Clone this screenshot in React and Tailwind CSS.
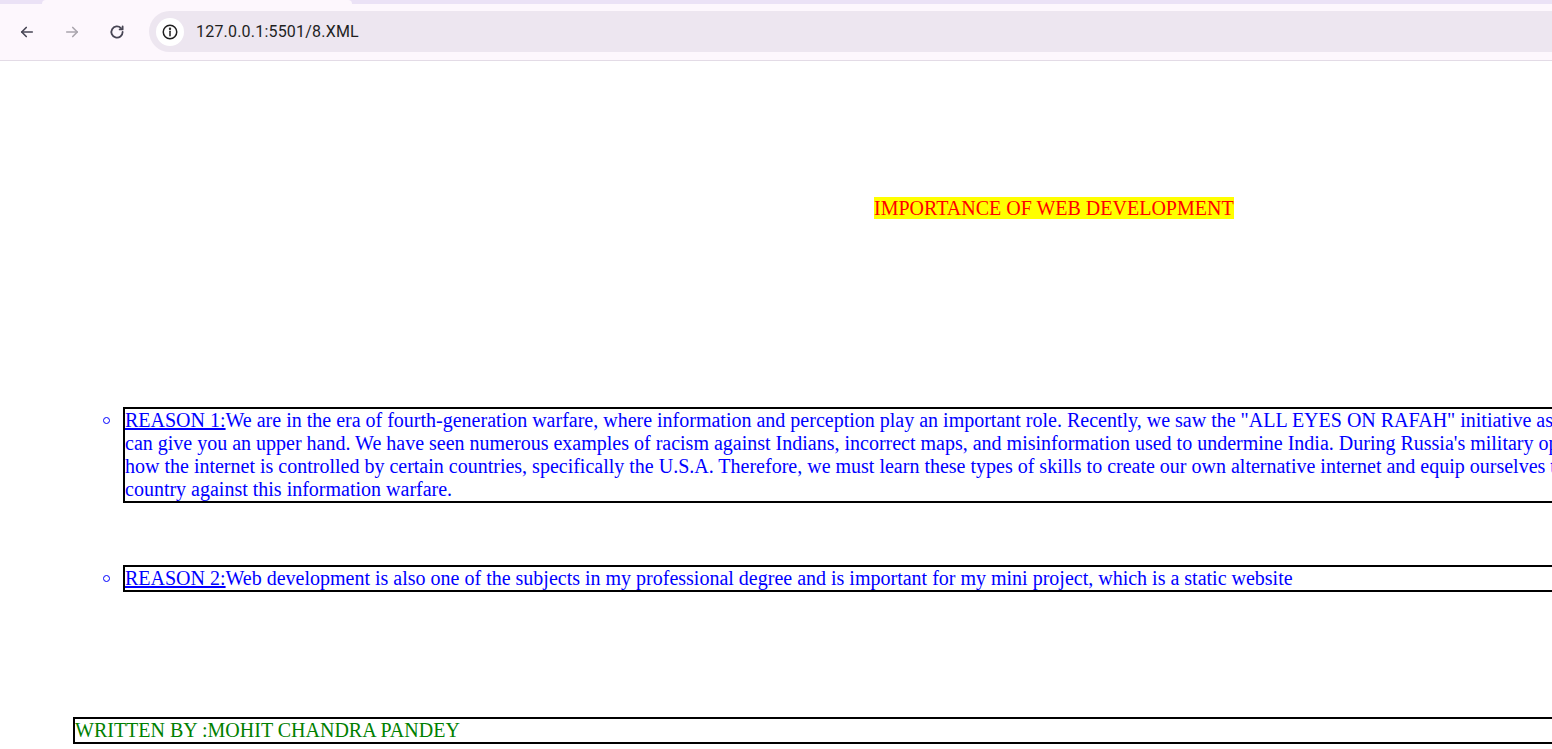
import React from "react";

function Chrome() {
  return (
    <div className="relative h-[61px] w-full bg-[#fdf7fd] border-b border-[#e3dbe6] flex items-center pt-[3px]">
      <div className="absolute left-0 top-0 h-[4px] w-full bg-[#ebe2f6]" />
      <div className="absolute left-[42px] top-0 h-[4px] w-[310px] bg-[#fdf7fd] rounded-t-[6px]" />
      <div className="flex items-center pl-[18px] gap-[27px]">
        <svg width="18" height="18" viewBox="0 0 24 24" fill="none" stroke="#474554" strokeWidth="2.2" strokeLinecap="round" strokeLinejoin="round">
          <path d="M19 12H5" />
          <path d="M11 6l-6 6 6 6" />
        </svg>
        <svg width="18" height="18" viewBox="0 0 24 24" fill="none" stroke="#a9a5ad" strokeWidth="2.2" strokeLinecap="round" strokeLinejoin="round">
          <path d="M5 12h14" />
          <path d="M13 6l6 6-6 6" />
        </svg>
        <svg width="18" height="18" viewBox="0 0 24 24" fill="none" stroke="#474554" strokeWidth="2.4" strokeLinecap="round" strokeLinejoin="round">
          <path d="M19.5 12a7.5 7.5 0 1 1-2.2-5.3" />
          <path d="M19.5 4.5v4h-4" />
        </svg>
      </div>
      <div className="ml-[23px] h-[41px] flex-1 rounded-l-full bg-[#ede6f0] flex items-center pl-[7px]">
        <div className="h-[28px] w-[28px] rounded-full bg-white flex items-center justify-center">
          <svg width="18" height="18" viewBox="0 0 24 24" fill="none" stroke="#1f1f1f" strokeWidth="2">
            <circle cx="12" cy="12" r="9" />
            <path d="M12 11v6" strokeLinecap="round" />
            <circle cx="12" cy="7.6" r="0.6" fill="#1f1f1f" />
          </svg>
        </div>
        <span className="ml-[12px] text-[16px] text-[#1f1f1f] tracking-[0.2px]" style={{ fontFamily: '"Segoe UI", Roboto, "Noto Sans", sans-serif' }}>
          127.0.0.1:5501/8.XML
        </span>
      </div>
    </div>
  );
}

function Bullet() {
  return <div className="mt-[10px] h-[7px] w-[7px] shrink-0 rounded-full border-[1.5px] border-[#0000ff]" />;
}

export default function App() {
  const serif = { fontFamily: '"Liberation Serif", "Times New Roman", serif' };
  return (
    <div className="w-[1552px] h-[749px] overflow-hidden bg-white">
      <Chrome />
      <div className="w-[2200px] flex flex-col text-[20px] leading-[23px]" style={serif}>
        <div className="mt-[136px] pl-[874px]">
          <span className="bg-[#ffff00] text-[#ff0000]">IMPORTANCE OF WEB DEVELOPMENT</span>
        </div>

        <div className="mt-[187px] pl-[103px] flex items-start gap-[13px]">
          <Bullet />
          <div className="w-[2000px] border-2 border-black text-[#0000ff] whitespace-nowrap">
            <div>
              <span className="underline">REASON 1:</span>We are in the era of fourth-generation warfare, where information and perception play an important role. Recently, we saw the "ALL EYES ON RAFAH" initiative as a
            </div>
            <div>can give you an upper hand. We have seen numerous examples of racism against Indians, incorrect maps, and misinformation used to undermine India. During Russia's military operation</div>
            <div>how the internet is controlled by certain countries, specifically the U.S.A. Therefore, we must learn these types of skills to create our own alternative internet and equip ourselves to</div>
            <div>country against this information warfare.</div>
          </div>
        </div>

        <div className="mt-[62px] pl-[103px] flex items-start gap-[13px]">
          <Bullet />
          <div className="w-[2000px] border-2 border-black text-[#0000ff] whitespace-nowrap">
            <span className="underline">REASON 2:</span>Web development is also one of the subjects in my professional degree and is important for my mini project, which is a static website
          </div>
        </div>

        <div className="mt-[125px] pl-[73px]">
          <div className="w-[2050px] border-2 border-black text-[#008000] whitespace-nowrap">
            WRITTEN BY :MOHIT CHANDRA PANDEY
          </div>
        </div>
      </div>
    </div>
  );
}
